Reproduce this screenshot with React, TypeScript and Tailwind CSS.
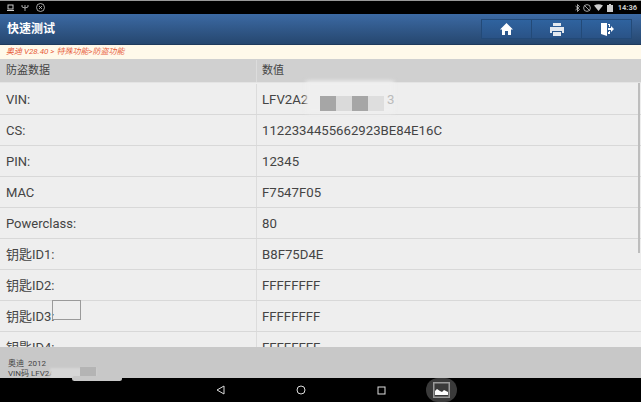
const rows = [
  { label: "VIN:", value: "LFV2A2" },
  { label: "CS:", value: "1122334455662923BE84E16C" },
  { label: "PIN:", value: "12345" },
  { label: "MAC", value: "F7547F05" },
  { label: "Powerclass:", value: "80" },
  { label: "钥匙ID1:", value: "B8F75D4E" },
  { label: "钥匙ID2:", value: "FFFFFFFF" },
  { label: "钥匙ID3:", value: "FFFFFFFF" },
  { label: "钥匙ID4:", value: "FFFFFFFF" },
];

function StatusBar() {
  return (
    <div className="flex h-[14px] shrink-0 items-center justify-between border-t border-[#999] bg-black pl-[7px] pr-[4px] text-[#ccc]">
      <div className="flex items-center gap-[7px]">
        <svg width="7" height="7" viewBox="0 0 7 7" fill="none" stroke="currentColor">
          <rect x="1" y="1" width="5" height="4" />
          <path d="M0 6.5h7" />
        </svg>
        <svg width="8" height="8" viewBox="0 0 8 8" fill="none" stroke="currentColor" strokeWidth="0.8">
          <path d="M1 1v2l3 1 3-1V1M4 1v6" />
        </svg>
        <svg width="9" height="9" viewBox="0 0 9 9" fill="none" stroke="currentColor" strokeWidth="0.8">
          <circle cx="4.5" cy="4.5" r="4" />
          <path d="M3 3l3 3M6 3L3 6" />
        </svg>
      </div>
      <div className="flex items-center">
        <svg width="5" height="8" viewBox="0 0 5 8" fill="none" stroke="currentColor" strokeWidth="0.8">
          <path d="M0.5 2l4 3.5L2.5 7.5V0.5l2 2L0.5 6" />
        </svg>
        <svg width="8" height="8" viewBox="0 0 8 8" fill="none" stroke="currentColor" strokeWidth="0.8" className="ml-[3px]">
          <circle cx="4" cy="4" r="3.4" />
          <path d="M1.7 1.7l4.6 4.6" />
        </svg>
        <svg width="9" height="7" viewBox="0 0 9 7" fill="currentColor" className="ml-[3px]">
          <path d="M0 1.5Q4.5 -1 9 1.5L4.5 7z" />
        </svg>
        <svg width="6" height="8" viewBox="0 0 6 8" fill="currentColor" className="ml-[4px]">
          <path d="M2 0h2v1h2v7H0V1h2z" />
        </svg>
        <span className="ml-[5px] text-[7.5px] font-bold leading-none">14:36</span>
      </div>
    </div>
  );
}

function Header() {
  return (
    <div className="flex h-[31px] shrink-0 items-center justify-between border-b border-[#1f3a5c] bg-gradient-to-b from-[#3c6aa4] to-[#26476f] pl-[7px] pr-[9px]">
      <span className="text-[12px] font-bold text-white">快速测试</span>
      <div className="flex h-[20px] w-[151px] border border-[#234a78] bg-gradient-to-b from-[#2f639f] to-[#2a5387]">
        <button className="flex flex-1 items-center justify-center border-r border-[#234a78]">
          <svg width="13" height="12" viewBox="0 0 13 12" fill="white">
            <path d="M6.5 0L13 6.5h-2V12H8V8H5v4H2V6.5H0z" />
          </svg>
        </button>
        <button className="flex flex-1 items-center justify-center border-r border-[#234a78]">
          <svg width="14" height="13" viewBox="0 0 14 13" fill="#e4e9ef">
            <path d="M3 0h8v3H3z" />
            <path d="M0 4h14v6h-2V8H2v2H0z" />
            <path d="M3 9h8v4H3z" />
          </svg>
        </button>
        <button className="flex flex-1 items-center justify-center">
          <svg width="14" height="13" viewBox="0 0 14 13" fill="white">
            <path d="M1 0h6v13L1 11z" />
            <path d="M8 1h2v3H9V2H8zM8 9h1V8h1v3H8z" />
            <path d="M8 5h3V3l3 3-3 3V7H8z" />
          </svg>
        </button>
      </div>
    </div>
  );
}

export default function App() {
  return (
    <div className="flex h-[402px] w-[641px] flex-col overflow-hidden bg-[#eeeeee] font-['Roboto','Noto_Sans_CJK_SC',sans-serif]">
      <StatusBar />
      <Header />

      {/* Breadcrumb */}
      <div className="flex h-[14px] shrink-0 items-center bg-[#fff9ea] pl-[6px] text-[8px] italic text-[#e8603c]">
        奥迪 V28.40 &gt; 特殊功能&gt;防盗功能
      </div>

      {/* Table */}
      <div className="relative min-h-0 flex-1 overflow-hidden">
        <div className="flex h-[24px] border-b border-[#e4e4e4] bg-[#d0d0d0] pt-[1px] text-[11px] text-[#444]">
          <div className="flex w-[257px] items-center border-r border-[#dcdcdc] pl-[6px]">防盗数据</div>
          <div className="flex flex-1 items-center pl-[5px]">数值</div>
        </div>
        <div className="pt-[1px]">
          {rows.map((row) => (
            <div key={row.label} className="flex h-[31px] border-b border-[#d8d8d8] text-[13px] text-[#444]">
              <div className="flex w-[257px] items-center border-r border-[#dcdcdc] pl-[6px] pt-[1px]">{row.label}</div>
              <div className="flex flex-1 items-center pl-[5px] pt-[1px] text-[13.2px]">{row.value}</div>
            </div>
          ))}
        </div>

        {/* Blurred-out part of the VIN */}
        <div className="absolute left-[306px] top-[22px] h-[32px] w-[88px] bg-[#efefef] blur-[2px]" />
        <div className="absolute left-[320px] top-[37px] h-[15px] w-[16px] bg-[#a6a6a6]" />
        <div className="absolute left-[336px] top-[37px] h-[15px] w-[16px] bg-[#dadada]" />
        <div className="absolute left-[352px] top-[37px] h-[15px] w-[16px] bg-[#a6a6a6]" />
        <div className="absolute left-[368px] top-[37px] h-[15px] w-[16px] bg-[#dedede]" />
        <span className="absolute left-[387px] top-[31px] text-[13.2px] text-[#bbb]">3</span>

        {/* Scrollbar */}
        <div className="absolute right-[1px] top-[24px] h-[170px] w-[2px] bg-[#bdbdbd]" />

        {/* Stray selection box */}
        <div className="absolute left-[52px] top-[241px] h-[20px] w-[29px] border border-[#9a9a9a]" />
      </div>

      {/* Vehicle info */}
      <div className="relative h-[31px] shrink-0 bg-[#c8c8c8] pl-[8px] pt-[12px] text-[8px] leading-[10px] text-[#444]">
        <div>奥迪&nbsp; 2012</div>
        <div>VIN码 LFV2A</div>
        <div className="absolute left-[50px] top-[21px] h-[11px] w-[46px] bg-[#d6d6d6] blur-[1px]" />
        <div className="absolute left-[80px] top-[20px] h-[11px] w-[16px] bg-[#b4b4b4]" />
      </div>

      {/* Navigation bar */}
      <div className="relative flex h-[24px] shrink-0 items-center gap-[71px] bg-black pl-[216px] text-[#ddd]">
        <div className="absolute left-[72px] top-[-2px] h-[5px] w-[50px] rounded-full bg-[#c8c8c8]" />
        <svg width="9" height="10" viewBox="0 0 9 10" fill="none" stroke="currentColor">
          <path d="M8 1v8L1 5z" />
        </svg>
        <svg width="10" height="10" viewBox="0 0 10 10" fill="none" stroke="currentColor">
          <circle cx="5" cy="5" r="4" />
        </svg>
        <svg width="9" height="9" viewBox="0 0 9 9" fill="none" stroke="currentColor">
          <rect x="1" y="1" width="7" height="7" />
        </svg>
        <div className="ml-[-31px] flex h-[24px] w-[31px] items-center justify-center rounded-full bg-[#3a3a3a]">
          <svg width="17" height="16" viewBox="0 0 17 16">
            <rect x="0.75" y="0.75" width="15.5" height="14.5" fill="none" stroke="#9a9a9a" strokeWidth="1.5" />
            <path d="M2 13V9l2-2 3 2 2 1 2-2 4 2v3z" fill="white" />
          </svg>
        </div>
      </div>
    </div>
  );
}
